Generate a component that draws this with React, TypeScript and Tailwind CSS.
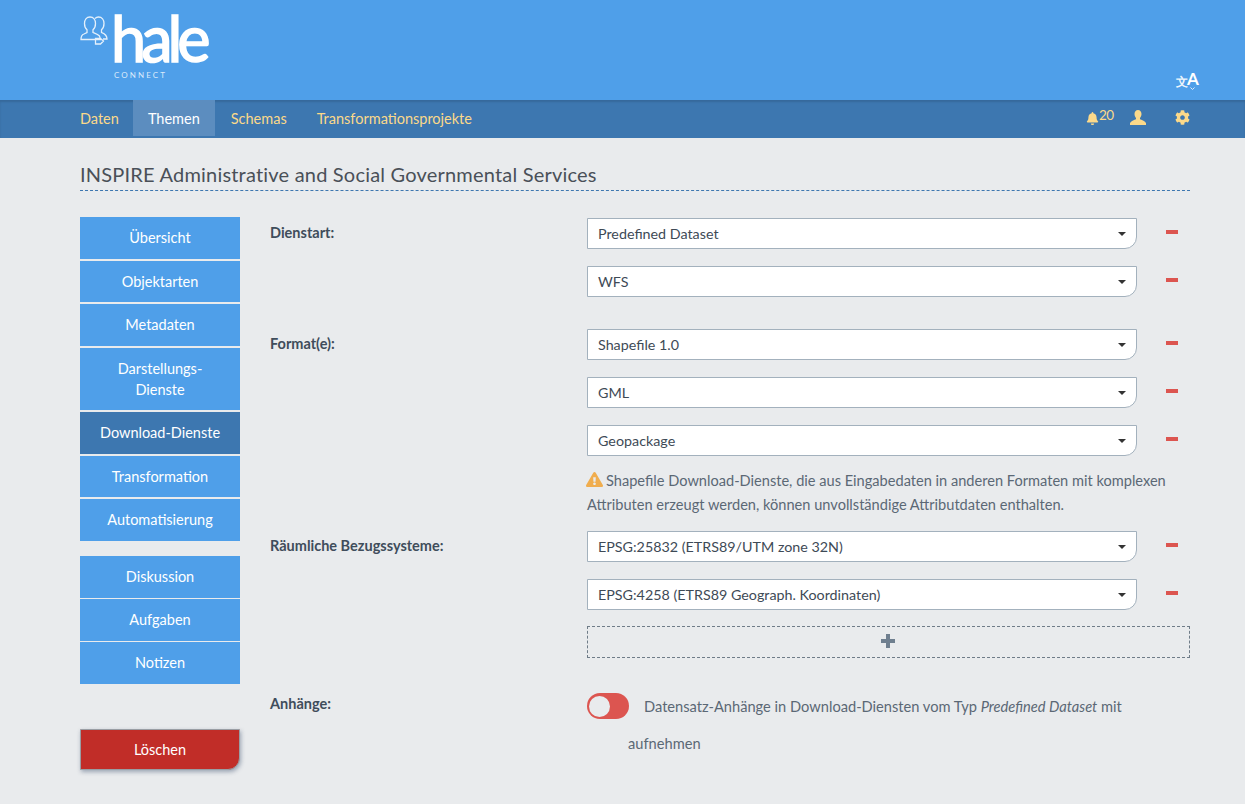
import type { ReactNode } from "react";
import { FaBell, FaCog, FaExclamationTriangle } from "react-icons/fa";

const font = { fontFamily: "Lato, 'Noto Sans', sans-serif" };

const navItems = ["Daten", "Themen", "Schemas", "Transformationsprojekte"];

const sideTop = [
  { label: "Übersicht", cls: "h-[42px] pb-[2px]" },
  { label: "Objektarten", cls: "h-[41px]" },
  { label: "Metadaten", cls: "h-[42px] pb-[2px]" },
  { label: "Darstellungs-\nDienste", cls: "h-[62px]" },
  { label: "Download-Dienste", cls: "h-[42px] pb-[2px]", active: true },
  { label: "Transformation", cls: "h-[41px]" },
  { label: "Automatisierung", cls: "h-[42px] pb-[2px]" },
];

const sideBottom = [
  { label: "Diskussion", cls: "h-[42px] pb-[2px]" },
  { label: "Aufgaben", cls: "h-[42px] pb-[2px]" },
  { label: "Notizen", cls: "h-[42px] pb-[2px]" },
];

function SideButton({ label, cls, active }: { label: string; cls: string; active?: boolean }) {
  return (
    <div
      className={`flex items-center justify-center whitespace-pre-line text-center text-[14.5px] leading-[21px] text-white ${cls} ${
        active ? "bg-[#3d77b0]" : "bg-[#4f9fe9]"
      }`}
    >
      {label}
    </div>
  );
}

function SelectRow({ value }: { value: string }) {
  return (
    <div className="flex items-start">
      <div className="flex h-[31px] w-[550px] items-center justify-between rounded-br-[12px] border border-[#a3b1bd] bg-white pl-[10px] pr-[10px] text-[14.3px] text-[#3e4a56]">
        <span>{value}</span>
        <span className="h-0 w-0 border-x-[4px] border-t-[4px] border-x-transparent border-t-[#333]" />
      </div>
      <span className="ml-[29px] mt-[12px] h-[4px] w-[12px] bg-[#dc5550]" />
    </div>
  );
}

function FormRow({ label, children, className }: { label: string; children: ReactNode; className?: string }) {
  return (
    <div className={`flex ${className ?? ""}`}>
      <div className="w-[317px] shrink-0 text-[14.5px] font-bold leading-[30px] text-[#3f4d5b]">{label}</div>
      <div className="flex w-[603px] flex-col gap-[17px]">{children}</div>
    </div>
  );
}

function HaleLogo() {
  return (
    <div className="relative h-[100px] w-[140px] text-white">
      <svg
        className="absolute left-0 top-[16px]"
        width="28"
        height="29"
        viewBox="0 0 28 29"
        fill="none"
        stroke="currentColor"
        strokeWidth="1.3"
        opacity="0.85"
      >
        <path d="M10 1c3.600 0 5.500 3 5.500 6.500 0 2.800-1 5-2.500 6.300v2.700c2.500 1 5 1.800 6.500 3.500l1 3.500H1c0-3.500 1.500-5 3-5.500l3-1.500v-2.700C5.500 12.500 4.500 10.300 4.500 7.500 4.500 4 6.400 1 10 1Z" />
        <path d="M15 2.500C16 1.500 17.200 1 18.500 1 22 1 24 4 24 7.500c0 2.800-1 5-2.500 6.300v2.700c2.500 1 5.500 2 5.500 6.500h-4" />
        <path d="M15.500 22.500h5l3 2.500-3 3h-5z" />
      </svg>
      <span className="absolute left-[31px] top-[8px] text-[63px] font-normal leading-[60px] tracking-[-5px] [-webkit-text-stroke:1.5px_white]">
        hale
      </span>
      <span className="absolute left-[34px] top-[70px] text-[8px] leading-[10px] tracking-[2.1px] text-[#dbeafb]">
        CONNECT
      </span>
    </div>
  );
}

export default function App() {
  return (
    <div className="min-h-[804px] bg-[#e9ebed]" style={font}>
      <header className="relative h-[100px] bg-[#4f9fe9] pl-[80px]">
        <HaleLogo />
        <div className="absolute left-[1176px] top-[71px] flex h-[21px] items-start text-white">
          <span className="mt-[3px] text-[12px] font-bold leading-[15px] opacity-90">文</span>
          <div className="-ml-[1px] flex flex-col items-center">
            <span className="text-[17px] font-bold leading-[16px]">A</span>
            <svg width="5" height="4" viewBox="0 0 5 4" fill="none" stroke="currentColor" opacity="0.8">
              <path d="M.5 .5l2 2 2-2" />
            </svg>
          </div>
        </div>
      </header>

      <nav className="flex h-[38px] items-start justify-between bg-[#3d77b0] pl-[65px] pr-[55px] shadow-[inset_0_2px_2px_rgba(0,0,0,0.12)]">
        <div className="flex text-[14.5px] leading-[37px] text-[#fbd98a]">
          {navItems.map((item) => (
            <div
              key={item}
              className={`h-[36px] px-[15px] ${item === "Themen" ? "-ml-[1px] mr-[1px] bg-[#5c8dbf] text-white" : ""}`}
            >
              {item}
            </div>
          ))}
        </div>
        <div className="flex items-center gap-[18px] pt-[10px] text-[#fbd98a]">
          <div className="flex w-[26px] items-start">
            <FaBell size={13} className="mt-[2px] shrink-0" />
            <span className="-mt-[3px] text-[13.5px] leading-[16px] tracking-[-0.5px]">20</span>
          </div>
          <svg width="16" height="15" viewBox="0 0 16 15" fill="currentColor">
            <path d="M8 0c2.200 0 3.500 1.700 3.500 4 0 1.800-.8 3.200-1.500 4v1.300c1.500.7 4.500 1.500 6 3.700v2H0v-2c1.500-2.200 4.500-3 6-3.700V8C5.300 7.200 4.500 5.800 4.500 4 4.500 1.700 5.800 0 8 0Z" />
          </svg>
          <FaCog size={15} className="ml-[11px]" />
        </div>
      </nav>

      <main className="pl-[80px] pr-[55px]">
        <h1 className="mt-[24px] h-[29px] border-b border-dashed border-[#3d77b0] text-[20px] leading-[24px] tracking-[0.2px] text-[#4a5058]">
          INSPIRE Administrative and Social Governmental Services
        </h1>

        <div className="mt-[26px] flex gap-[30px]">
          <aside className="w-[160px] shrink-0">
            <div className="flex flex-col gap-[2px]">
              {sideTop.map((b) => (
                <SideButton key={b.label} {...b} />
              ))}
            </div>
            <div className="mt-[15px] flex flex-col gap-[1px]">
              {sideBottom.map((b) => (
                <SideButton key={b.label} {...b} />
              ))}
            </div>
            <div className="mt-[45px] flex h-[41px] items-center justify-center rounded-br-[12px] border border-[#9a9ea4] bg-[#c12d28] text-[14.5px] text-white shadow-[1px_2px_4px_rgba(60,80,110,0.45)]">
              Löschen
            </div>
          </aside>

          <div className="min-w-0 flex-1 pt-[1px]">
            <FormRow label="Dienstart:">
              <SelectRow value="Predefined Dataset" />
              <SelectRow value="WFS" />
            </FormRow>

            <FormRow label="Format(e):" className="mt-[32px]">
              <SelectRow value="Shapefile 1.0" />
              <SelectRow value="GML" />
              <SelectRow value="Geopackage" />
            </FormRow>

            <div className="ml-[317px] mt-[13px] w-[600px] text-[14.6px] leading-[24px] text-[#5b6875]">
              <FaExclamationTriangle size={17} className="-ml-[1px] mr-[3px] inline-block align-[-2px] text-[#f0ad4e]" />
              Shapefile Download-Dienste, die aus Eingabedaten in anderen Formaten mit komplexen Attributen erzeugt
              werden, können unvollständige Attributdaten enthalten.
            </div>

            <FormRow label="Räumliche Bezugssysteme:" className="mt-[14px]">
              <SelectRow value="EPSG:25832 (ETRS89/UTM zone 32N)" />
              <SelectRow value="EPSG:4258 (ETRS89 Geograph. Koordinaten)" />
            </FormRow>

            <div className="ml-[317px] mt-[16px] flex h-[32px] w-[603px] items-center justify-center border border-dashed border-[#6f7c88] pb-[2px] pr-[2px] text-[#6f7f8f]">
              <svg width="14" height="14" viewBox="0 0 14 14" fill="currentColor">
                <path d="M5 0h4v5h5v4H9v5H5V9H0V5h5Z" />
              </svg>
            </div>

            <FormRow label="Anhänge:" className="mt-[31px]">
              <div className="flex items-start text-[14.65px] text-[#5b6875]">
                <div className="mt-[4px] flex h-[26px] w-[42px] shrink-0 items-center rounded-full bg-[#dc5550] pl-[2px]">
                  <span className="h-[21px] w-[21px] rounded-full bg-[#e9ebed]" />
                </div>
                <p className="ml-[15px] w-[500px] pt-[2px] leading-[32px]">
                  Datensatz-Anhänge in Download-Diensten vom Typ <em>Predefined Dataset</em> mit
                </p>
              </div>
              <div className="-mt-[15px] ml-[41px] text-[14.65px] leading-[38px] text-[#5b6875]">aufnehmen</div>
            </FormRow>
          </div>
        </div>
      </main>
    </div>
  );
}
